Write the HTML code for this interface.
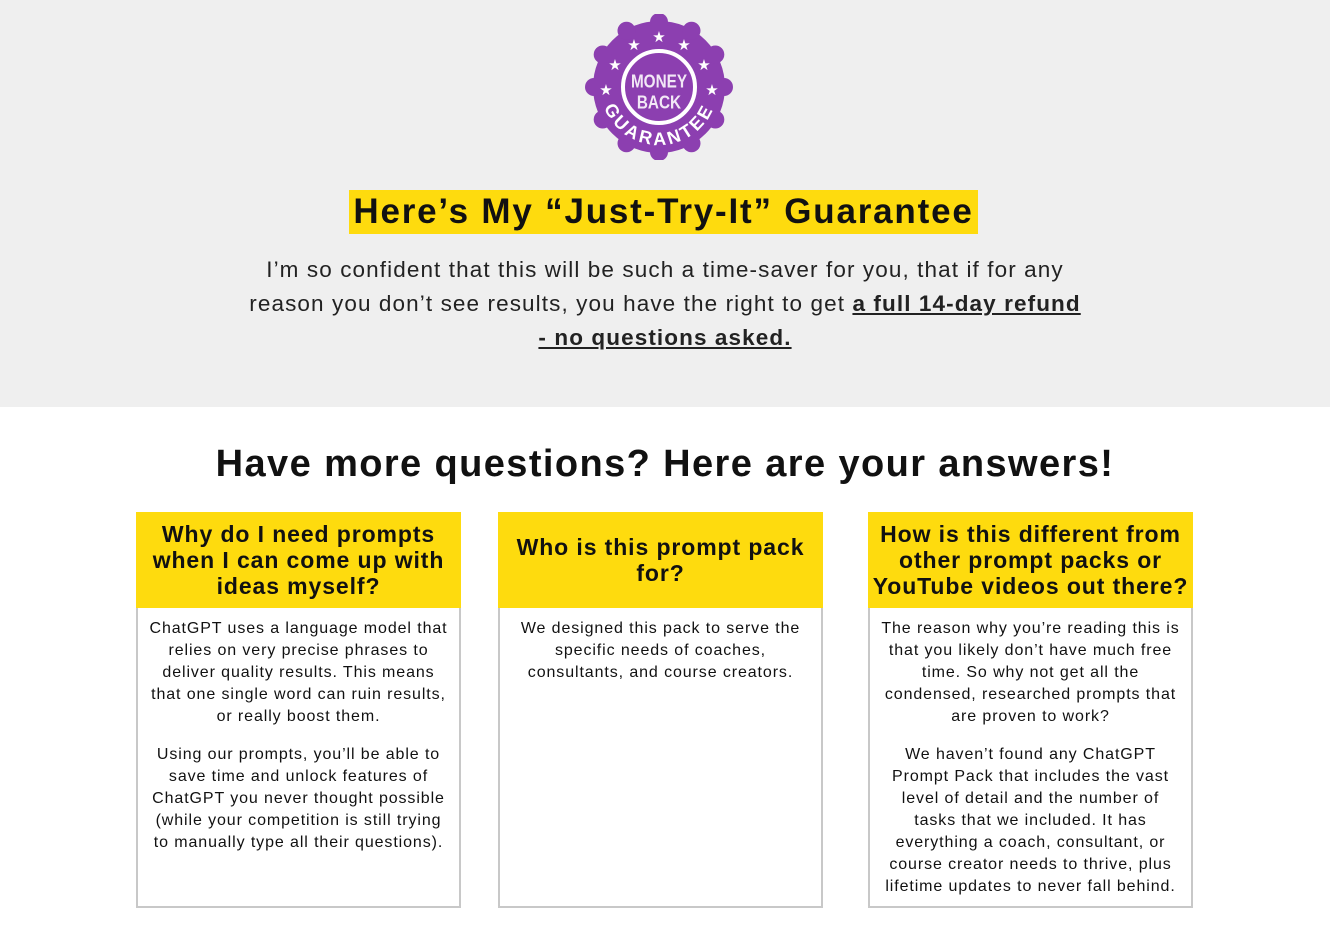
<!DOCTYPE html>
<html><head><meta charset="utf-8"><style>
*{margin:0;padding:0;box-sizing:border-box}
body{width:1330px;height:926px;background:#fff;font-family:"Liberation Sans",sans-serif;color:#111;overflow:hidden;position:relative}
.top{position:absolute;left:0;top:0;width:1330px;height:407px;background:#efefef}
.badge{position:absolute;left:584px;top:14px}
.h{position:absolute;top:190px;left:349px;width:629px;height:44px;background:#fedb0e;font-weight:bold;font-size:35px;line-height:44px;text-align:center;letter-spacing:1.8px;white-space:nowrap}
.p{position:absolute;top:253px;left:140px;width:1050px;text-align:center;font-size:22.5px;line-height:34px;color:#222;letter-spacing:1.1px;white-space:nowrap}
.p b{text-decoration:underline;color:#222}
.t{position:absolute;top:440px;left:0;width:1330px;text-align:center;font-weight:bold;font-size:38px;line-height:48px;letter-spacing:1.4px}
.c{position:absolute;top:512px;width:325px;height:396px;border:2px solid #c8c8c8;border-top:none;background:#fff}
.c .hd{position:absolute;left:-2px;top:0;width:325px;height:96px;background:#fedb0e;font-weight:bold;font-size:23px;line-height:26px;text-align:center;display:flex;align-items:center;justify-content:center;white-space:nowrap;letter-spacing:0.9px}
.c .bd{position:absolute;top:106px;left:-2px;width:325px;text-align:center;font-size:16px;line-height:22px;color:#111;white-space:nowrap;letter-spacing:0.9px}
.c .bd p{margin-bottom:16px}
</style></head><body>
<div class="top"></div>
<svg class="badge" width="150" height="146" viewBox="0 0 150 146">
<g fill="#8c3fb0">
<circle cx="75" cy="73" r="66"/>
<circle cx="75" cy="8" r="9"/><circle cx="107.5" cy="16.7" r="9"/><circle cx="131.3" cy="40.5" r="9"/><circle cx="140" cy="73" r="9"/><circle cx="131.3" cy="105.5" r="9"/><circle cx="107.5" cy="129.3" r="9"/><circle cx="75" cy="138" r="9"/><circle cx="42.5" cy="129.3" r="9"/><circle cx="18.7" cy="105.5" r="9"/><circle cx="10" cy="73" r="9"/><circle cx="18.7" cy="40.5" r="9"/><circle cx="42.5" cy="16.7" r="9"/>
</g>
<circle cx="75" cy="73" r="36" fill="none" stroke="#fff" stroke-width="4"/>
<text x="75" y="74" fill="#f2e8f6" font-family="Liberation Sans" font-weight="bold" font-size="17" text-anchor="middle" transform="translate(75 0) scale(0.9 1.1) translate(-75 -7)">MONEY</text>
<text x="75" y="93" fill="#f2e8f6" font-family="Liberation Sans" font-weight="bold" font-size="17" text-anchor="middle" transform="translate(75 0) scale(0.9 1.1) translate(-75 -7)">BACK</text>
<path id="arc" d="M16 72 A59 59 0 0 0 134 72" fill="none"/>
<text fill="#fff" font-family="Liberation Sans" font-weight="bold" font-size="18" letter-spacing="3"><textPath href="#arc" startOffset="50%" text-anchor="middle">GUARANTEE</textPath></text>
<g fill="#fff" font-size="15" text-anchor="middle" font-family="DejaVu Sans">
<text x="75" y="28">★</text><text x="50" y="36">★</text><text x="100" y="36">★</text><text x="31" y="56">★</text><text x="120" y="56">★</text><text x="22" y="81">★</text><text x="128" y="81">★</text>
</g>
</svg>
<div class="h">Here’s My “Just-Try-It” Guarantee</div>
<div class="p">I’m so confident that this will be such a time-saver for you, that if for any<br>reason you don’t see results, you have the right to get <b>a full 14-day refund</b><br><b>- no questions asked.</b></div>
<div class="t">Have more questions? Here are your answers!</div>
<div class="c" style="left:136px"><div class="hd">Why do I need prompts<br>when I can come up with<br>ideas myself?</div><div class="bd"><p>ChatGPT uses a language model that<br>relies on very precise phrases to<br>deliver quality results. This means<br>that one single word can ruin results,<br>or really boost them.</p><p>Using our prompts, you’ll be able to<br>save time and unlock features of<br>ChatGPT you never thought possible<br>(while your competition is still trying<br>to manually type all their questions).</p></div></div>
<div class="c" style="left:498px"><div class="hd">Who is this prompt pack<br>for?</div><div class="bd"><p>We designed this pack to serve the<br>specific needs of coaches,<br>consultants, and course creators.</p></div></div>
<div class="c" style="left:868px"><div class="hd">How is this different from<br>other prompt packs or<br>YouTube videos out there?</div><div class="bd"><p>The reason why you’re reading this is<br>that you likely don’t have much free<br>time. So why not get all the<br>condensed, researched prompts that<br>are proven to work?</p><p>We haven’t found any ChatGPT<br>Prompt Pack that includes the vast<br>level of detail and the number of<br>tasks that we included. It has<br>everything a coach, consultant, or<br>course creator needs to thrive, plus<br>lifetime updates to never fall behind.</p></div></div>
</body></html>
